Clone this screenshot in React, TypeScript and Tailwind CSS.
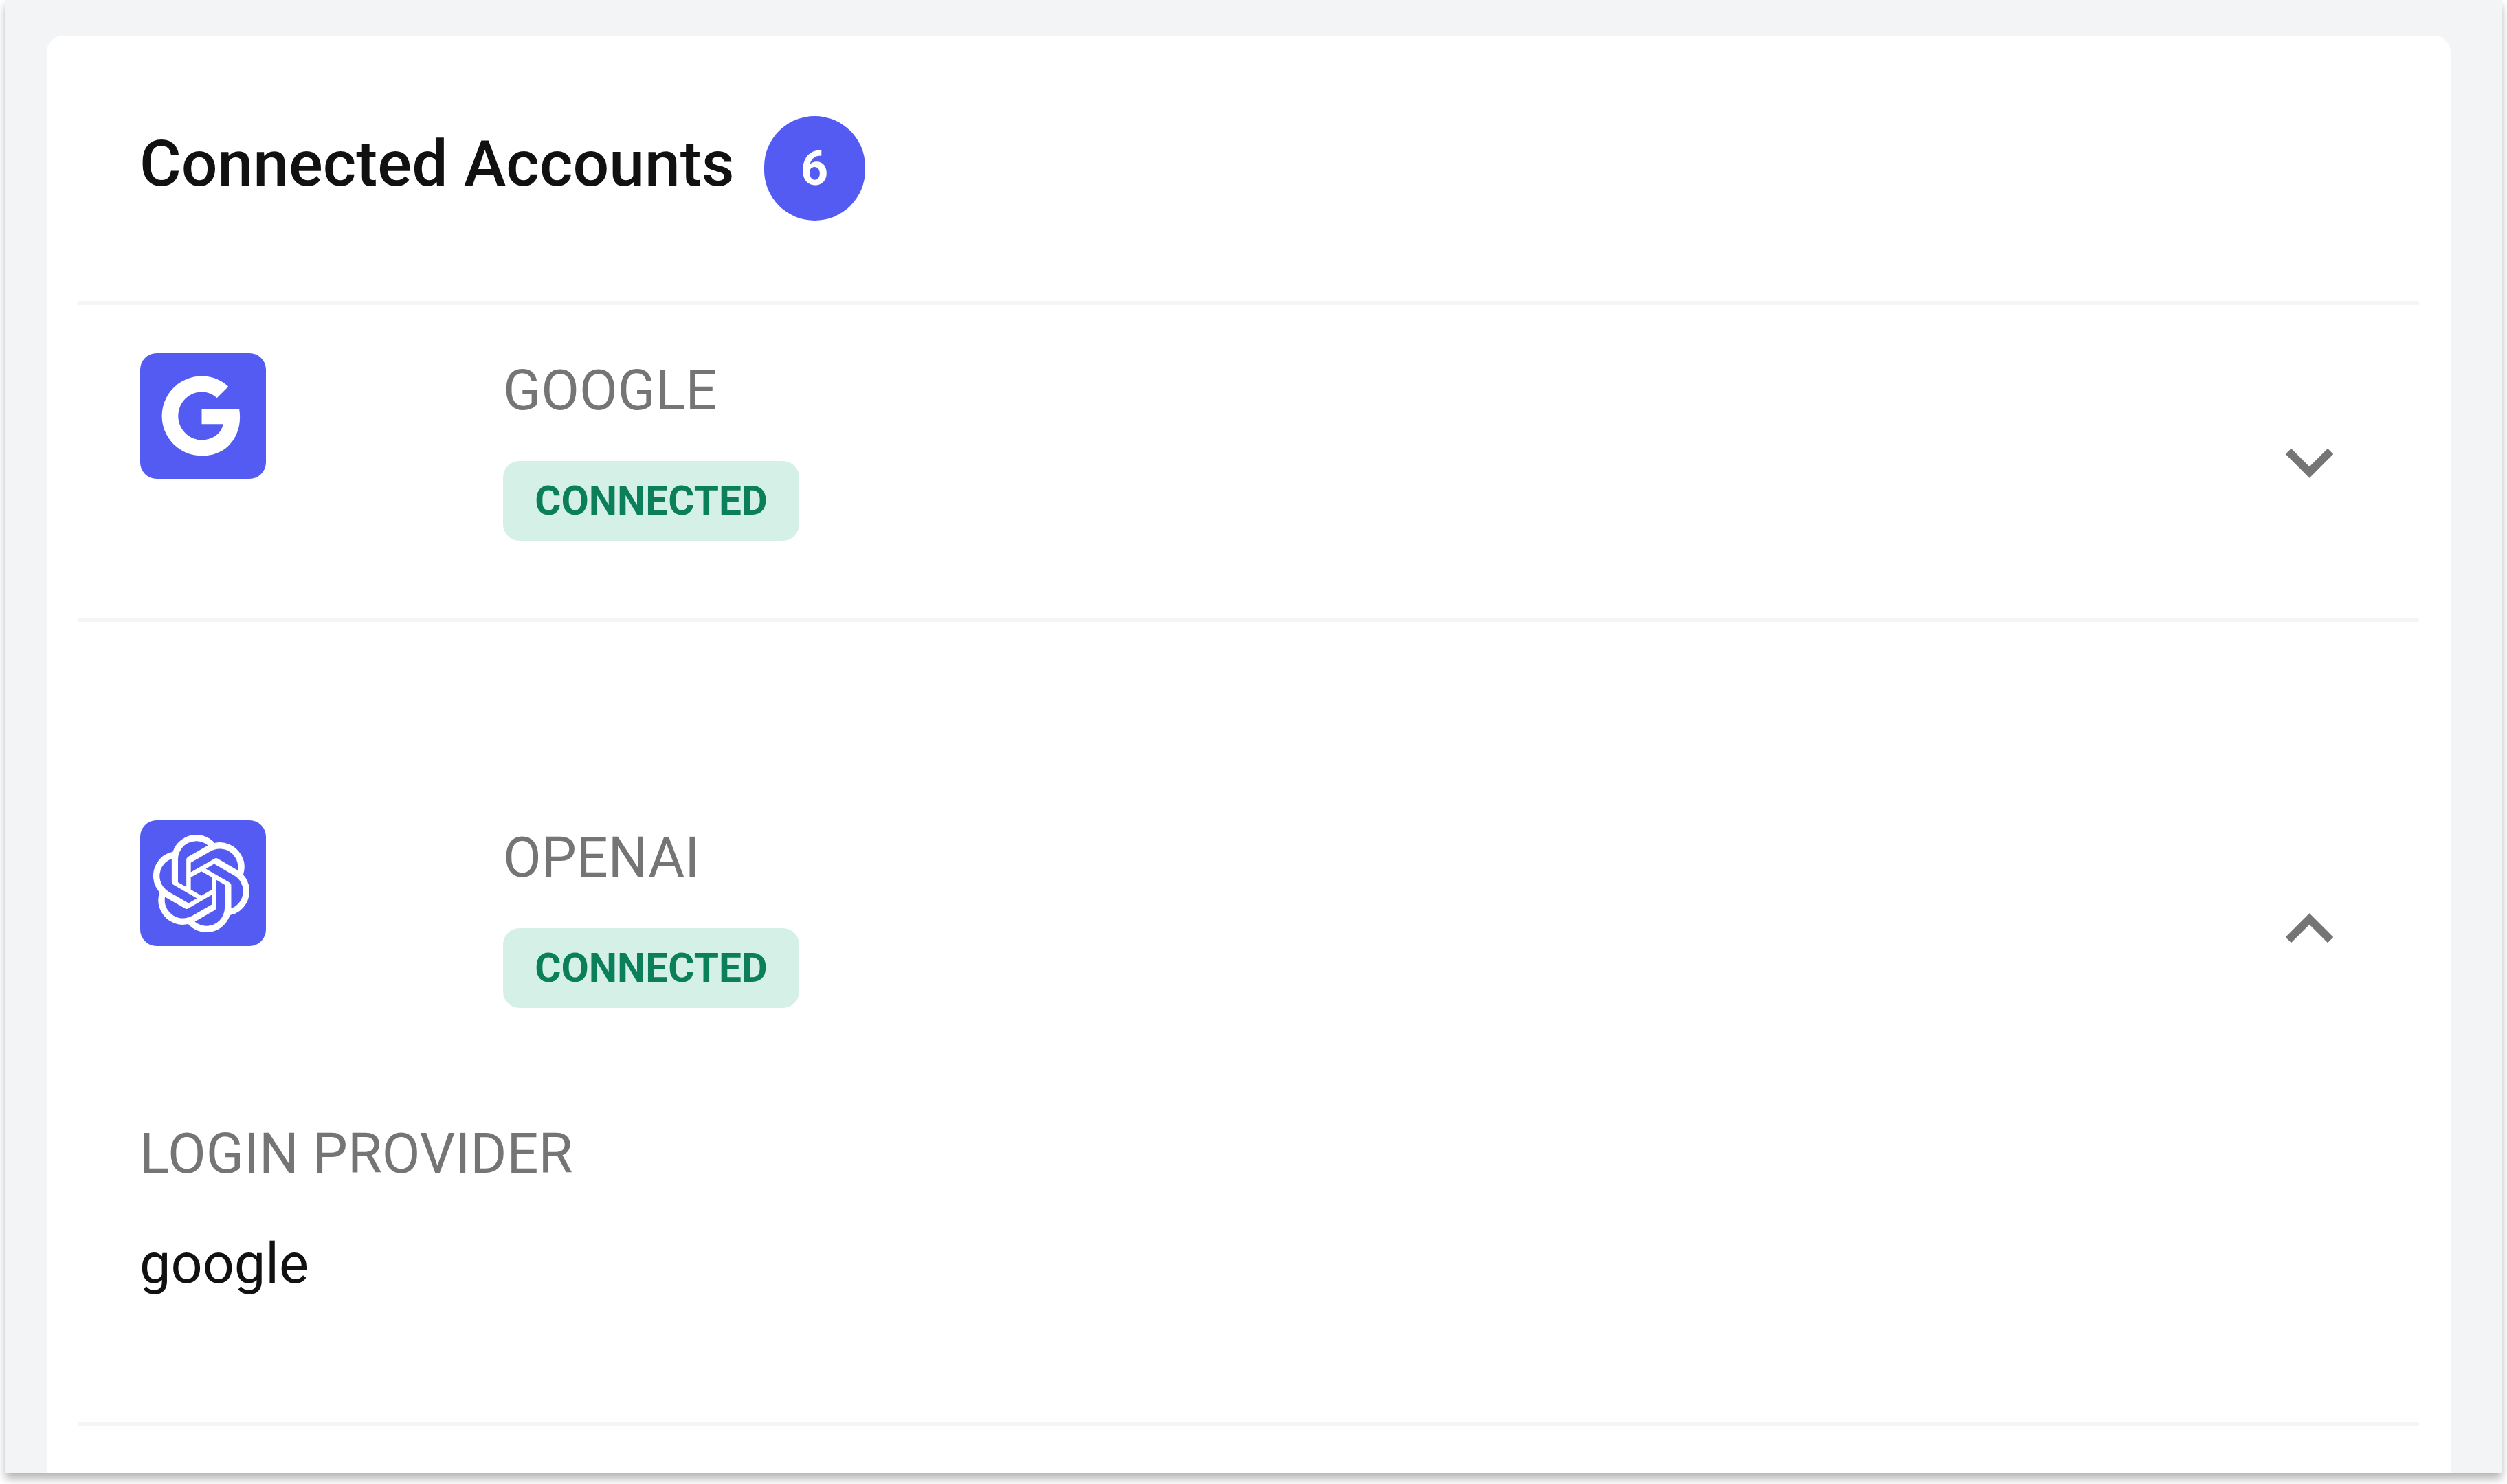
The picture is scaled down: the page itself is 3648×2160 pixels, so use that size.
import { RiGoogleFill } from "react-icons/ri";
import { SiOpenai } from "react-icons/si";
import type { ReactNode } from "react";

function Chevron({ up }: { up?: boolean }) {
  return (
    <svg viewBox="0 0 24 24" className="w-[139px] h-[139px] shrink-0" fill="#757575">
      <path d={up ? "M12 8l-6 6 1.41 1.41L12 10.83l4.59 4.58L18 14z" : "M16.59 8.59 12 13.17 7.41 8.59 6 10l6 6 6-6z"} />
    </svg>
  );
}

function Row({ icon, name, up }: { icon: ReactNode; name: string; up?: boolean }) {
  return (
    <div className="flex h-[456px] items-center pl-[90px]">
      <div className="flex h-full flex-1 items-start">
        <div className="mt-[70px] flex h-[183px] w-[183px] shrink-0 items-center justify-center rounded-[24px] bg-[#535bf2] text-white">
          {icon}
        </div>
        <div className="ml-[345px] mt-[75px] flex flex-col items-start">
          <div className="mb-[52px] text-[81px] leading-[100px] text-[#757575]">{name}</div>
          <div className="flex h-[116px] w-[431px] items-center justify-center rounded-[24px] bg-[#d5f1e7] text-[58.5px] font-bold leading-none text-[#0a7f5a]">
            CONNECTED
          </div>
        </div>
      </div>
      <div className="mr-[90px]">
        <Chevron up={up} />
      </div>
    </div>
  );
}

export default function App() {
  return (
    <div className="min-h-[2160px] w-[3648px] bg-white font-['Roboto',sans-serif]">
      <div className="ml-[8px] h-[2144px] w-[3632px] overflow-hidden bg-[#f3f4f6] pl-[60px] pt-[52px] shadow-[0_8px_12px_rgba(0,0,0,0.3)]">
        <div className="h-[2092px] w-[3498px] rounded-t-[24px] bg-white">
          <div className="mx-[46px] box-content flex h-[386px] items-center border-b-[6px] border-[#f5f5f5] pl-[89px]">
            <h1 className="mb-[14px] text-[93px] font-medium leading-none text-[#111111]">Connected Accounts</h1>
            <div className="ml-[43px] flex h-[152px] w-[147px] items-center justify-center rounded-full bg-[#535bf2] text-[70px] font-bold text-white">
              6
            </div>
          </div>
          <div className="mx-[46px] border-b-[6px] border-[#f5f5f5]">
            <Row name="GOOGLE" icon={<RiGoogleFill className="mr-[5px] h-[139px] w-[139px]" />} />
          </div>
          <div className="mx-[46px] mt-[218px] border-b-[6px] border-[#f5f5f5]">
            <Row name="OPENAI" up icon={<SiOpenai className="mr-[6px] h-[142px] w-[142px]" />} />
            <div className="h-[490px] pl-[89px] pt-[50px]">
              <div className="text-[81px] leading-[100px] text-[#757575]">LOGIN PROVIDER</div>
              <div className="mt-[60px] text-[81px] leading-[100px] text-[#111111]">google</div>
            </div>
          </div>
        </div>
      </div>
    </div>
  );
}
